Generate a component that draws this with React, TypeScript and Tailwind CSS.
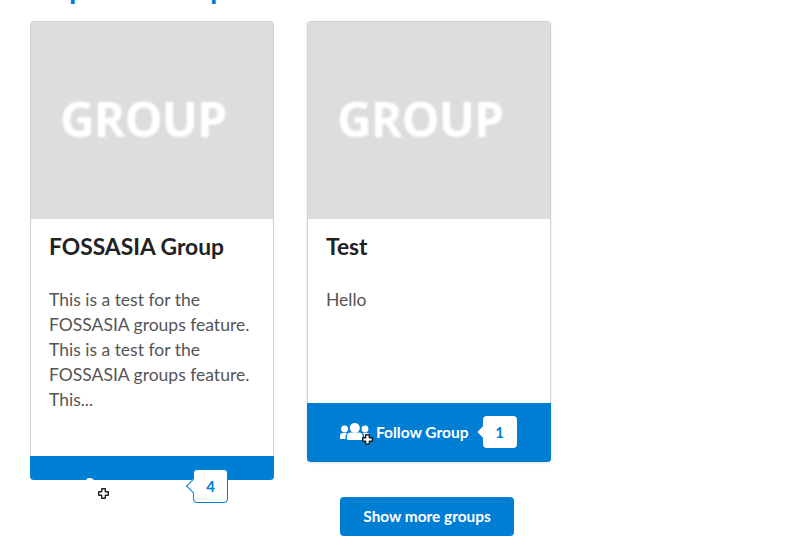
import React from 'react';

const PlusMark = ({ className }: { className: string }) => (
    <svg className={className} width="11" height="11" viewBox="0 0 11 11">
        <path
            d="M3.7 .7h3.6v3h3v3.6h-3v3h-3.6v-3h-3v-3.6h3z"
            fill="#fff"
            stroke="#222"
            strokeWidth="1.4"
            strokeLinejoin="round"
        />
    </svg>
);

const UsersIcon = () => (
    <svg width="30" height="20" viewBox="0 0 30 20" fill="#fff">
        <circle cx="4.6" cy="6" r="3.4" />
        <circle cx="25" cy="6" r="3.4" />
        <circle cx="14.8" cy="5" r="5" />
        <path d="M0 16v-3c0-2 1.2-3 2.8-3h4.6c-1.2 1-1.9 2.3-1.9 3.8V16z" />
        <path d="M30 16v-3c0-2-1.2-3-2.8-3h-4.6c1.2 1 1.9 2.3 1.9 3.8V16z" />
        <path d="M7 17v-4c0-2.2 1.6-3.6 3.6-3.6h8.4c2 0 3.6 1.4 3.6 3.6v4z" />
    </svg>
);

const GroupImage = () => (
    <div className="h-[197px] bg-[#dddddd] rounded-t-[4px] flex items-center pl-[29px] pb-[3px]">
        <span className="font-['Open_Sans',sans-serif] font-bold text-[48px] tracking-[-1px] leading-none text-white blur-[1px]">
            GROUP
        </span>
    </div>
);

export default function App() {
    return (
        <div className="h-[548px] w-[790px] overflow-hidden bg-white px-[30px] font-['Lato',sans-serif]">
            <h2 className="h-[21px] -mt-[31px] ml-[4px] text-[30px] leading-[36px] font-bold text-[#007ed3]">
                Popular Groups
            </h2>
            <div className="mt-[31px] flex items-start gap-[33px]">
                {/* First card, footer cut short */}
                <div className="relative w-[244px] h-[459px] flex flex-col rounded-[4px] border border-[#d0d0d0] border-b-0 bg-white">
                    <GroupImage />
                    <div className="flex-1 px-[18px] pt-[13px]">
                        <h3 className="text-[22.8px] leading-[28px] font-bold text-[#222222]">FOSSASIA Group</h3>
                        <p className="mt-[27px] text-[17.5px] leading-[25px] text-[#555555]">
                            This is a test for the FOSSASIA groups feature. This is a test for the FOSSASIA groups feature. This...
                        </p>
                    </div>
                    <div className="h-[24px] -mx-px rounded-b-[4px] bg-[#007ed3] overflow-hidden pl-[45px] pt-[22px]">
                        <UsersIcon />
                    </div>
                    <span className="absolute left-[162px] top-[447px] w-[35px] h-[34px] flex items-center justify-center rounded-[4px] border border-[#007ed3] bg-white text-[15px] font-bold text-[#007ed3]">
                        4
                        <span className="absolute -left-[6px] top-[11px] w-[10px] h-[10px] rotate-45 border-b border-l border-[#007ed3] bg-white" />
                    </span>
                    <PlusMark className="absolute left-[67px] top-[466px]" />
                </div>

                <div className="flex flex-col">
                    {/* Second card */}
                    <div className="relative w-[244px] h-[441px] flex flex-col rounded-[4px] border border-[#d0d0d0] border-b-0 bg-white shadow-sm">
                        <GroupImage />
                        <div className="flex-1 px-[18px] pt-[13px]">
                            <h3 className="text-[22.8px] leading-[28px] font-bold text-[#222222]">Test</h3>
                            <p className="mt-[27px] text-[17.5px] leading-[25px] text-[#555555]">Hello</p>
                        </div>
                        <div className="h-[59px] -mx-px rounded-b-[4px] bg-[#007ed3] flex items-center pl-[33px] gap-[6px]">
                            <UsersIcon />
                            <span className="text-[15.5px] font-bold text-white">Follow Group</span>
                            <span className="relative -mt-px ml-[8px] w-[34px] h-[32px] flex items-center justify-center rounded-[4px] bg-white text-[15px] font-bold text-[#007ed3]">
                                1
                                <span className="absolute -left-[4px] top-[12px] w-[8px] h-[8px] rotate-45 bg-white" />
                            </span>
                        </div>
                        <PlusMark className="absolute left-[54px] top-[412px]" />
                    </div>
                    <button className="mt-[35px] ml-[33px] w-[174px] h-[39px] rounded-[4px] bg-[#007ed3] text-[15.4px] font-bold text-white">
                        Show more groups
                    </button>
                </div>
            </div>
        </div>
    );
}
